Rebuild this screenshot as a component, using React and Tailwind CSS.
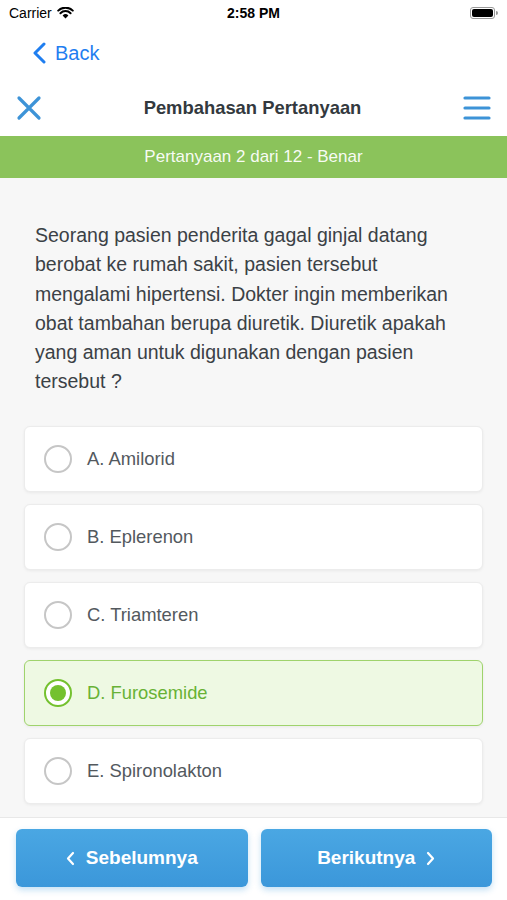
const options = [
  { label: "A. Amilorid" },
  { label: "B. Eplerenon" },
  { label: "C. Triamteren" },
  { label: "D. Furosemide", selected: true },
  { label: "E. Spironolakton" },
];

function StatusBar() {
  return (
    <div className="relative flex h-[26px] items-center justify-between px-[9px] text-[14px] text-black">
      <div className="flex items-center gap-[5px]">
        <span>Carrier</span>
        <svg width="17" height="12" viewBox="0 0 17 12">
          <path d="M8.5 11.5 L5.6 8.4 A4.2 4.2 0 0 1 11.4 8.4 Z" fill="#000" />
          <path d="M3.4 6.2 A7.3 7.3 0 0 1 13.6 6.2" stroke="#000" strokeWidth="2" fill="none" strokeLinecap="round" />
          <path d="M1.2 3.6 A10.5 10.5 0 0 1 15.8 3.6" stroke="#000" strokeWidth="2" fill="none" strokeLinecap="round" />
        </svg>
      </div>
      <span className="absolute left-1/2 -translate-x-1/2 font-bold">2:58 PM</span>
      <div className="flex items-center">
        <div className="flex h-[12px] w-[25px] items-center rounded-[3px] border border-[#999] p-[1px]">
          <div className="h-full w-full rounded-[2px] bg-black" />
        </div>
        <div className="ml-[1px] h-[4px] w-[2px] rounded-r-sm bg-[#999]" />
      </div>
    </div>
  );
}

function Radio({ selected }) {
  if (selected) {
    return (
      <div className="flex h-[28px] w-[28px] shrink-0 items-center justify-center rounded-full border-[2.5px] border-[#74c12f] bg-white">
        <div className="h-[16px] w-[16px] rounded-full bg-[#74c12f]" />
      </div>
    );
  }
  return <div className="h-[28px] w-[28px] shrink-0 rounded-full border-2 border-[#c6c6c6] bg-white" />;
}

export default function App() {
  return (
    <div className="flex h-[900px] w-[507px] flex-col overflow-hidden bg-white font-['Liberation_Sans',Arial,sans-serif]">
      <StatusBar />

      <div className="flex h-[54px] items-center pl-[32px] text-[#1f7ef0]">
        <svg width="15" height="22" viewBox="0 0 15 22">
          <path d="M12 2 L3 11 L12 20" stroke="currentColor" strokeWidth="3" fill="none" strokeLinecap="round" strokeLinejoin="round" />
        </svg>
        <span className="ml-[8px] text-[20px]">Back</span>
      </div>

      <div className="flex h-[56px] items-center justify-between px-[16px]">
        <svg width="26" height="26" viewBox="0 0 26 26">
          <path d="M3 3 L23 23 M23 3 L3 23" stroke="#3d93d7" strokeWidth="3.2" strokeLinecap="round" />
        </svg>
        <h1 className="text-[18.4px] font-bold text-[#33393e]">Pembahasan Pertanyaan</h1>
        <svg width="28" height="24" viewBox="0 0 28 24">
          <path d="M2 2 H26 M2 12 H26 M2 22 H26" stroke="#3d93d7" strokeWidth="3.2" strokeLinecap="round" />
        </svg>
      </div>

      <div className="flex h-[42px] items-center justify-center bg-[#8bc35b] text-[17px] text-white/95">
        Pertanyaan 2 dari 12 - Benar
      </div>

      <div className="flex-1 bg-[#f7f7f7] px-[24px] pb-[13px] pt-[43px]">
        <p className="w-[430px] pl-[11px] text-[19.5px] leading-[29.3px] text-[#3b4146]">
          Seorang pasien penderita gagal ginjal datang berobat ke rumah sakit, pasien tersebut mengalami hipertensi. Dokter ingin memberikan obat tambahan berupa diuretik. Diuretik apakah yang aman untuk digunakan dengan pasien tersebut ?
        </p>

        <div className="mt-[29px] flex flex-col gap-[12px]">
          {options.map((o) => (
            <div
              key={o.label}
              className={
                o.selected
                  ? "flex h-[66px] items-center gap-[15px] rounded-[6px] border-[1.5px] border-[#9fd36c] bg-[#eef9e3] pl-[19px] shadow-[0_1px_3px_rgba(0,0,0,0.06)]"
                  : "flex h-[66px] items-center gap-[15px] rounded-[6px] border border-[#ececec] bg-white pl-[19px] shadow-[0_1px_3px_rgba(0,0,0,0.06)]"
              }
            >
              <Radio selected={o.selected} />
              <span className={o.selected ? "text-[18.4px] text-[#68b235]" : "text-[18.4px] text-[#53595e]"}>{o.label}</span>
            </div>
          ))}
        </div>
      </div>

      <div className="flex gap-[13px] border-t border-[#e8e8e8] bg-white pb-[13px] pl-[16px] pr-[15px] pt-[11px]">
        <button className="flex h-[58px] flex-1 items-center justify-center gap-[11px] rounded-[6px] bg-gradient-to-b from-[#4aa7e3] to-[#3b97da] text-[19px] font-bold text-white shadow-[0_3px_6px_rgba(59,151,218,0.3)]">
          <svg width="9" height="15" viewBox="0 0 9 15">
            <path d="M7 2 L2 7.5 L7 13" stroke="#fff" strokeWidth="2.2" fill="none" strokeLinecap="round" strokeLinejoin="round" />
          </svg>
          Sebelumnya
        </button>
        <button className="flex h-[58px] flex-1 items-center justify-center gap-[11px] rounded-[6px] bg-gradient-to-b from-[#4aa7e3] to-[#3b97da] text-[19px] font-bold text-white shadow-[0_3px_6px_rgba(59,151,218,0.3)]">
          Berikutnya
          <svg width="9" height="15" viewBox="0 0 9 15">
            <path d="M2 2 L7 7.5 L2 13" stroke="#fff" strokeWidth="2.2" fill="none" strokeLinecap="round" strokeLinejoin="round" />
          </svg>
        </button>
      </div>
    </div>
  );
}
